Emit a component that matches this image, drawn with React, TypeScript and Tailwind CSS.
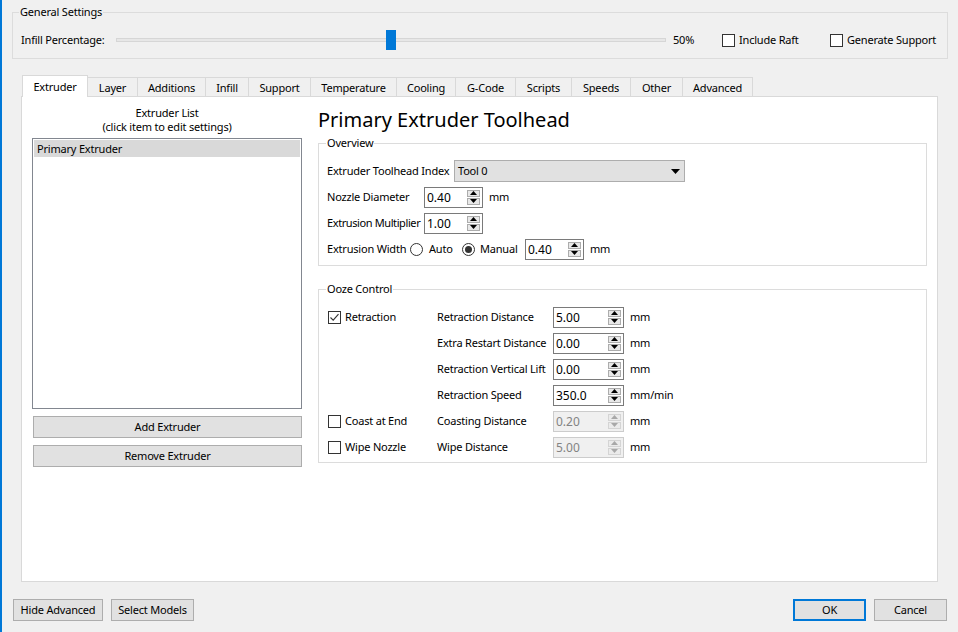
import React from "react";

const tabs: { label: string; w: string }[] = [
  { label: "Extruder", w: "w-[66px]" },
  { label: "Layer", w: "w-[50px]" },
  { label: "Additions", w: "w-[68px]" },
  { label: "Infill", w: "w-[43px]" },
  { label: "Support", w: "w-[62px]" },
  { label: "Temperature", w: "w-[86px]" },
  { label: "Cooling", w: "w-[59px]" },
  { label: "G-Code", w: "w-[60px]" },
  { label: "Scripts", w: "w-[56px]" },
  { label: "Speeds", w: "w-[59px]" },
  { label: "Other", w: "w-[52px]" },
  { label: "Advanced", w: "w-[70px]" },
];

// ooze rows: checkbox on the left (optional), label, value, unit
const oozeRows = [
  { check: "Retraction", checked: true, label: "Retraction Distance", value: "5.00", unit: "mm", disabled: false },
  { check: "", checked: false, label: "Extra Restart Distance", value: "0.00", unit: "mm", disabled: false },
  { check: "", checked: false, label: "Retraction Vertical Lift", value: "0.00", unit: "mm", disabled: false },
  { check: "", checked: false, label: "Retraction Speed", value: "350.0", unit: "mm/min", disabled: false },
  { check: "Coast at End", checked: false, label: "Coasting Distance", value: "0.20", unit: "mm", disabled: true },
  { check: "Wipe Nozzle", checked: false, label: "Wipe Distance", value: "5.00", unit: "mm", disabled: true },
];

function CheckBox({ checked = false }: { checked?: boolean }) {
  return (
    <span className="flex h-[13px] w-[13px] shrink-0 items-center justify-center border border-[#333333] bg-white">
      {checked && (
        <svg width="11" height="11" viewBox="0 0 11 11">
          <path d="M1.5 5.5 L4.2 8.2 L9.5 2.2" fill="none" stroke="#333333" strokeWidth="1.1" />
        </svg>
      )}
    </span>
  );
}

function Radio({ checked = false }: { checked?: boolean }) {
  return (
    <span className="flex h-[13px] w-[13px] shrink-0 items-center justify-center rounded-full border border-[#333333] bg-white">
      {checked && <span className="h-[7px] w-[7px] rounded-full bg-[#333333]" />}
    </span>
  );
}

function SpinBtn({ up = false, disabled = false }: { up?: boolean; disabled?: boolean }) {
  const c = disabled ? "#a8a8a8" : "#000000";
  return (
    <span
      className={`flex flex-1 items-center justify-center border ${
        disabled ? "border-[#d4d4d4] bg-[#ebebeb]" : "border-[#acacac] bg-[#e8e8e8]"
      }`}
    >
      <svg width="7" height="4" viewBox="0 0 7 4">
        {up ? <path d="M0 4 L3.5 0 L7 4 Z" fill={c} /> : <path d="M0 0 L7 0 L3.5 4 Z" fill={c} />}
      </svg>
    </span>
  );
}

function SpinBox({ value, w, disabled = false }: { value: string; w: string; disabled?: boolean }) {
  return (
    <div
      className={`flex h-[21px] shrink-0 items-stretch border ${w} ${
        disabled ? "border-[#cccccc] bg-[#f0f0f0] text-[#838383]" : "border-[#7a7a7a] bg-white text-black"
      }`}
    >
      <span className="flex-1 pl-[2px] text-[12px] leading-[19px] tracking-normal">{value}</span>
      <div className="flex w-[15px] flex-col gap-px py-[2px] pr-[2px]">
        <SpinBtn up disabled={disabled} />
        <SpinBtn disabled={disabled} />
      </div>
    </div>
  );
}

function Button({ label, w, primary = false }: { label: string; w: string; primary?: boolean }) {
  return (
    <button
      className={`h-[22px] shrink-0 bg-[#e1e1e1] leading-[18px] text-black ${w} ${
        primary ? "border-2 border-[#0078d7]" : "border border-[#adadad]"
      }`}
    >
      {label}
    </button>
  );
}

export default function App() {
  return (
    <div className="flex h-[632px] w-[958px] flex-col overflow-hidden border-l-2 border-[#0078d7] bg-[#f0f0f0] font-['Segoe_UI','Noto_Sans',sans-serif] text-[11px] leading-[14px] tracking-[-0.2px] whitespace-nowrap text-black">
      {/* General Settings */}
      <fieldset className="mt-[5px] ml-[10px] w-[936px] border border-[#dcdcdc] px-[8px] pt-[8px] pb-[5px]">
        <legend className="ml-[-2px] px-[1px]">General Settings</legend>
        <div className="flex h-[26px] items-center">
          <span className="w-[95px] shrink-0">Infill Percentage:</span>
          <div className="relative flex h-[20px] w-[550px] shrink-0 items-center">
            <div className="h-[4px] w-full border border-[#d6d6d6] bg-[#e7e7e7]" />
            <div className="absolute top-0 left-[270px] h-[20px] w-[10px] bg-[#0078d7]" />
          </div>
          <span className="ml-[7px] w-[49px] shrink-0">50%</span>
          <div className="flex w-[108px] shrink-0 items-center gap-[4px]">
            <CheckBox />
            <span>Include Raft</span>
          </div>
          <div className="flex items-center gap-[4px]">
            <CheckBox />
            <span>Generate Support</span>
          </div>
        </div>
      </fieldset>

      {/* Tab widget */}
      <div className="mt-[16px] ml-[19px] flex w-[917px] flex-col">
        <div className="flex h-[21px] items-end pl-px">
          {tabs.map((t, i) =>
            i === 0 ? (
              <div
                key={t.label}
                className={`relative z-10 -mb-px flex h-[22px] shrink-0 items-center justify-center border border-b-0 border-[#d9d9d9] bg-white ${t.w}`}
              >
                {t.label}
              </div>
            ) : (
              <div
                key={t.label}
                className={`flex h-[19px] shrink-0 items-center justify-center border-t border-r border-[#d9d9d9] bg-[#f0f0f0] pt-px ${t.w}`}
              >
                {t.label}
              </div>
            )
          )}
        </div>
        <div className="flex h-[486px] border border-[#d9d9d9] bg-white pt-[9px] pl-[10px]">
          {/* Left column */}
          <div className="flex w-[270px] shrink-0 flex-col">
            <div className="text-center leading-[14px]">
              <div>Extruder List</div>
              <div>(click item to edit settings)</div>
            </div>
            <div className="mt-[4px] h-[271px] border border-[#828790] bg-white p-px">
              <div className="h-[17px] bg-[#d9d9d9] pl-[3px] leading-[17px]">Primary Extruder</div>
            </div>
            <div className="mt-[7px] flex flex-col gap-[7px] pl-px">
              <Button label="Add Extruder" w="w-[269px]" />
              <Button label="Remove Extruder" w="w-[269px]" />
            </div>
          </div>

          {/* Right column */}
          <div className="ml-[16px] flex w-[609px] shrink-0 flex-col">
            <div className="h-[28px] text-[20px] leading-[28px] tracking-normal">Primary Extruder Toolhead</div>
            <fieldset className="mt-[2px] border border-[#dcdcdc] px-[8px] pt-[8px] pb-[3px]">
              <legend className="ml-[-1px] px-[1px]">Overview</legend>
              <div className="flex h-[26px] items-center">
                <span className="w-[127px] shrink-0">Extruder Toolhead Index</span>
                <div className="flex h-[22px] w-[231px] items-center justify-between border border-[#adadad] bg-[#e1e1e1] pr-[4px] pl-[3px]">
                  <span>Tool 0</span>
                  <svg width="9" height="5" viewBox="0 0 9 5">
                    <path d="M0 0 L9 0 L4.5 5 Z" fill="#000" />
                  </svg>
                </div>
              </div>
              <div className="flex h-[26px] items-center">
                <span className="w-[97px] shrink-0">Nozzle Diameter</span>
                <SpinBox value="0.40" w="w-[59px]" />
                <span className="ml-[6px]">mm</span>
              </div>
              <div className="flex h-[26px] items-center">
                <span className="w-[97px] shrink-0 tracking-[-0.4px]">Extrusion Multiplier</span>
                <SpinBox value="1.00" w="w-[59px]" />
              </div>
              <div className="flex h-[26px] items-center">
                <span className="w-[83px] shrink-0">Extrusion Width</span>
                <div className="flex w-[52px] shrink-0 items-center gap-[6px]">
                  <Radio />
                  <span>Auto</span>
                </div>
                <div className="flex w-[63px] shrink-0 items-center gap-[5px]">
                  <Radio checked />
                  <span>Manual</span>
                </div>
                <SpinBox value="0.40" w="w-[59px]" />
                <span className="ml-[6px]">mm</span>
              </div>
            </fieldset>

            <fieldset className="mt-[16px] border border-[#dcdcdc] px-[8px] pt-[8px] pb-[2px]">
              <legend className="ml-[-1px] px-[1px]">Ooze Control</legend>
              {oozeRows.map((r) => (
                <div key={r.label} className="flex h-[26px] items-center">
                  <div className="flex w-[110px] shrink-0 items-center gap-[4px] pl-px">
                    {r.check && (
                      <>
                        <CheckBox checked={r.checked} />
                        <span>{r.check}</span>
                      </>
                    )}
                  </div>
                  <span className="w-[116px] shrink-0">{r.label}</span>
                  <SpinBox value={r.value} w="w-[71px]" disabled={r.disabled} />
                  <span className="ml-[6px]">{r.unit}</span>
                </div>
              ))}
            </fieldset>
          </div>
        </div>
      </div>

      {/* Bottom buttons */}
      <div className="mt-[17px] flex items-center px-[11px]">
        <Button label="Hide Advanced" w="w-[90px]" />
        <div className="ml-[8px]">
          <Button label="Select Models" w="w-[83px]" />
        </div>
        <div className="flex-1" />
        <Button label="OK" w="w-[73px]" primary />
        <div className="ml-[8px]">
          <Button label="Cancel" w="w-[73px]" />
        </div>
      </div>
    </div>
  );
}
